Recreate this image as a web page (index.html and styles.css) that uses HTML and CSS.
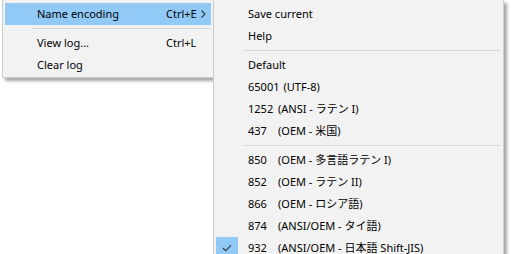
FILE: index.html
```html
<!DOCTYPE html>
<html>
<head>
<meta charset="utf-8">
<link rel="stylesheet" href="styles.css">
</head>
<body>
<div class="desk">
  <div class="menu main">
    <div class="item hot">
      <span class="gut"></span><span class="label">Name encoding</span><span class="key">Ctrl+E</span>
      <span class="arrow"><svg width="5" height="8" viewBox="0 0 5 8"><path d="M0.5 0.5 L4 4 L0.5 7.5" fill="none" stroke="#333" stroke-width="1.1"/></svg></span>
    </div>
    <div class="sep"></div>
    <div class="item">
      <span class="gut"></span><span class="label">View log...</span><span class="key">Ctrl+L</span><span class="arrow"></span>
    </div>
    <div class="item">
      <span class="gut"></span><span class="label">Clear log</span><span class="key"></span><span class="arrow"></span>
    </div>
  </div>
  <div class="menu sub">
    <div class="row"><span class="gut"></span><span>Save current</span></div>
    <div class="row"><span class="gut"></span><span>Help</span></div>
    <div class="sep"></div>
    <div class="row"><span class="gut"></span><span>Default</span></div>
    <div class="row"><span class="gut"></span><span class="num">65001</span><span>(UTF-8)</span></div>
    <div class="row"><span class="gut"></span><span class="num">1252</span><span>(ANSI - ラテン I)</span></div>
    <div class="row"><span class="gut"></span><span class="num">437</span><span>(OEM - 米国)</span></div>
    <div class="sep"></div>
    <div class="row"><span class="gut"></span><span class="num">850</span><span>(OEM - 多言語ラテン I)</span></div>
    <div class="row"><span class="gut"></span><span class="num">852</span><span>(OEM - ラテン II)</span></div>
    <div class="row"><span class="gut"></span><span class="num">866</span><span>(OEM - ロシア語)</span></div>
    <div class="row"><span class="gut"></span><span class="num">874</span><span>(ANSI/OEM - タイ語)</span></div>
    <div class="row"><span class="gut checked"><svg width="10" height="8" viewBox="0 0 10 8"><path d="M1 4 L3.8 6.8 L9 1.2" fill="none" stroke="#333" stroke-width="1.1"/></svg></span><span class="num">932</span><span>(ANSI/OEM - 日本語 Shift-JIS)</span></div>
  </div>
</div>
</body>
</html>
```
FILE: styles.css
```css
html, body {
  margin: 0;
  padding: 0;
  background: #ffffff;
  overflow: hidden;
}
body {
  font-family: "Noto Sans", "Noto Sans CJK JP", sans-serif;
  font-size: 11px;
  color: #000;
}
.desk {
  display: flex;
  align-items: flex-start;
  padding-left: 2px;
}
.menu {
  background: #f2f2f2;
  border: 1px solid #cccccc;
  padding: 2px 2px 1px 2px;
  box-shadow: 3px 3px 3px rgba(0, 0, 0, 0.35);
  box-sizing: border-box;
}
.main {
  width: 212px;
  border-top: none;
  padding-top: 3px;
  position: relative;
  z-index: 1;
}
.sub {
  width: 291px;
  margin-left: -1px;
  border-top: none;
  padding-top: 3px;
  position: relative;
  z-index: 2;
  height: 262px;
}
.item {
  display: flex;
  align-items: center;
  height: 22px;
  box-sizing: border-box;
  padding-bottom: 2px;
}
.item.hot {
  background: #91c9f7;
}
.gut {
  width: 32px;
  height: 20px;
  flex: none;
  display: flex;
  align-items: center;
  justify-content: center;
}
.item .label {
  width: 129px;
  flex: none;
}
.item .key {
  flex: 1;
}
.item .arrow {
  width: 10px;
  flex: none;
  display: flex;
  align-items: center;
  padding-top: 1px;
}
.sep {
  height: 1px;
  background: #d7d7d7;
  margin: 3px 0 3px 28px;
}
.sub .sep {
  margin-left: 27px;
}
.row {
  display: flex;
  align-items: center;
  height: 22px;
  box-sizing: border-box;
  padding-bottom: 2px;
  white-space: nowrap;
}
.gut.checked {
  width: 22px;
  height: 22px;
  margin-right: 10px;
  margin-bottom: -2px;
  background: #91c9f7;
}
.num {
  display: inline-block;
  min-width: 26px;
  margin-right: 4px;
}
```
